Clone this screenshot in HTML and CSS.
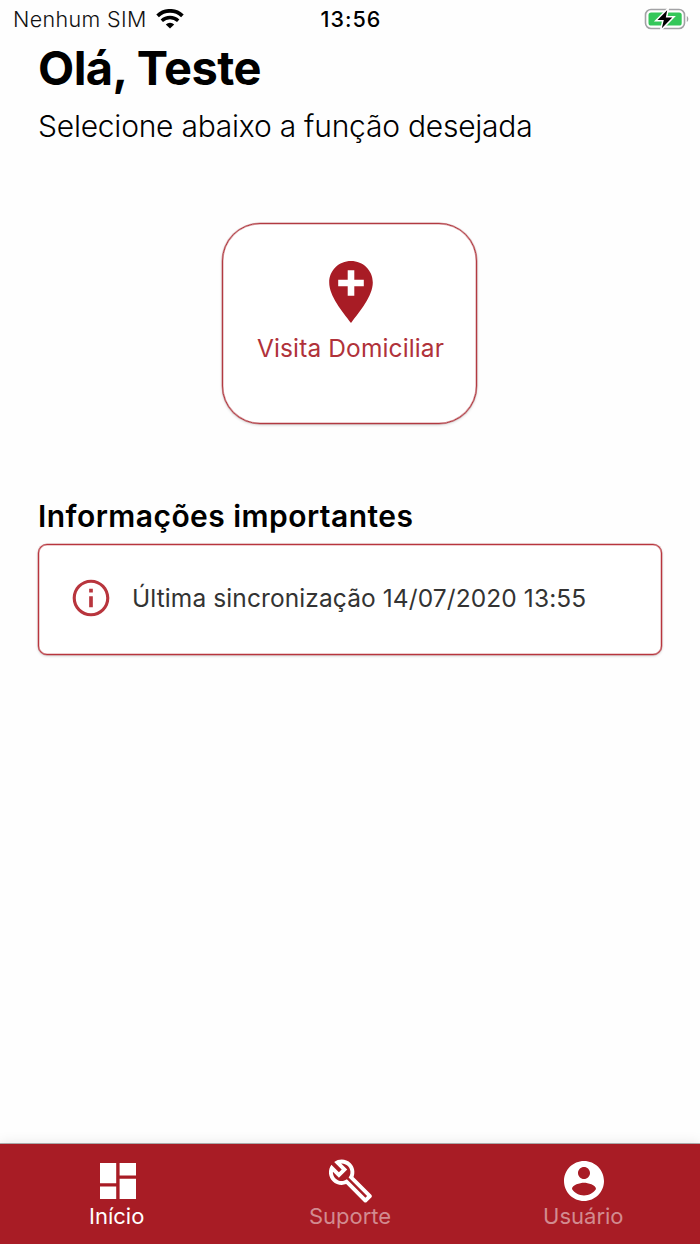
FILE: index.html
```html
<!DOCTYPE html>
<html lang="pt-BR">
<head>
<meta charset="UTF-8">
<meta name="viewport" content="width=device-width, initial-scale=1.0">
<title>Início</title>
<link rel="stylesheet" href="styles.css">
</head>
<body>

<div class="status-bar">
  <div class="carrier">
    <span class="carrier-name">Nenhum SIM</span>
    <svg class="wifi" width="28" height="20" viewBox="0 0 28 20">
      <path d="M1.600 6.800a18 18 0 0 1 24.800 0" fill="none" stroke="#000" stroke-width="3.800"/>
      <path d="M5.800 11.700a12 12 0 0 1 16.400 0" fill="none" stroke="#000" stroke-width="3.400"/>
      <path d="M14 19.600l-4.200-4.200a6 6 0 0 1 8.400 0z"/>
    </svg>
  </div>
  <span class="clock">13:56</span>
  <svg class="battery" width="45" height="24" viewBox="0 0 45 24">
    <rect x="1.500" y="2.500" width="39" height="19" rx="5.500" fill="none" stroke="#a2a2a5" stroke-width="1.600"/>
    <rect x="4.500" y="5.400" width="33.200" height="13.200" rx="2.600" fill="#34c759"/>
    <path d="M42.800 9c2 .8 2 5.200 0 6z" fill="#a2a2a5"/>
    <path d="M23.200 3.200L13.500 13h6.300L17.800 21.300 28.300 10.600h-6.500z" fill="#000" stroke="#fff" stroke-width="3" paint-order="stroke"/>
  </svg>
</div>

<main>
  <h1>Olá, Teste</h1>
  <p class="subtitle">Selecione abaixo a função desejada</p>

  <a class="visit-card" href="#visita">
    <svg width="44" height="62" viewBox="0 0 44 62">
      <path d="M22 0C9.800 0 .2 9.400 .2 21.500C.2 35 13 50 22 62C31 50 43.800 35 43.800 21.500C43.800 9.400 34.200 0 22 0z" fill="#a81c25"/>
      <path d="M18.700 9.200h6.600v9.500h9.500v6.600h-9.500v9.500h-6.600v-9.500H9.200v-6.600h9.500z" fill="#fff"/>
    </svg>
    <span>Visita Domiciliar</span>
  </a>

  <h2>Informações importantes</h2>
  <div class="info-card">
    <svg width="44" height="44" viewBox="0 0 24 24">
      <path fill="#b8353d" d="M11 7h2v2h-2zm0 4h2v6h-2zm1-9C6.480 2 2 6.480 2 12s4.480 10 10 10 10-4.480 10-10S17.520 2 12 2zm0 18.300c-4.570 0-8.300-3.730-8.300-8.300S7.430 3.700 12 3.700s8.300 3.730 8.300 8.300-3.730 8.300-8.300 8.300z"/>
    </svg>
    <span>Última sincronização 14/07/2020 13:55</span>
  </div>
</main>

<nav class="tab-bar">
  <a class="tab active" href="#inicio">
    <svg width="48" height="48" viewBox="0 0 48 48">
      <path fill="#fff" d="M6 6h16.200v20.200H6zM6 29.600h16.200V42H6zM25.600 6H42v12.400H25.600zM25.600 21.800H42V42H25.600z"/>
    </svg>
    <span>Início</span>
  </a>
  <a class="tab" href="#suporte">
    <svg width="47" height="47" viewBox="0 0 24 24">
      <path fill="#fff" d="M22.610 18.990l-9.080-9.080c.93-2.340.45-5.100-1.440-7C9.790.61 6.210.4 3.660 2.260L7.500 6.110 6.080 7.520 2.250 3.690C.39 6.230.6 9.820 2.900 12.110c1.860 1.860 4.570 2.350 6.890 1.480l9.110 9.110c.39.39 1.020.39 1.410 0l2.300-2.300c.4-.38.4-1.010 0-1.410zm-3 1.600l-9.460-9.460c-.61.45-1.290.72-2 .82-1.360.2-2.790-.21-3.830-1.250C3.370 9.760 2.930 8.500 3 7.260l3.090 3.090 4.240-4.240-3.090-3.090c1.240-.07 2.490.37 3.440 1.310 1.080 1.080 1.490 2.570 1.240 3.960-.12.710-.42 1.370-.88 1.960l9.450 9.450-.88.89z"/>
    </svg>
    <span>Suporte</span>
  </a>
  <a class="tab" href="#usuario">
    <svg width="48" height="48" viewBox="0 0 24 24">
      <path fill="#fff" d="M12 2C6.480 2 2 6.480 2 12s4.480 10 10 10 10-4.480 10-10S17.520 2 12 2zm0 3c1.660 0 3 1.340 3 3s-1.340 3-3 3-3-1.340-3-3 1.340-3 3-3zm0 14.200c-2.500 0-4.710-1.280-6-3.220.03-1.990 4-3.080 6-3.080 1.990 0 5.970 1.090 6 3.080-1.290 1.940-3.500 3.220-6 3.220z"/>
    </svg>
    <span>Usuário</span>
  </a>
</nav>

</body>
</html>
```
FILE: styles.css
```css
/* Basic reset */
* {
  margin: 0;
  padding: 0;
  box-sizing: border-box;
}

body {
  display: flex;
  flex-direction: column;
  height: 1244px;
  background: #fefefe;
  color: #000;
  font-family: Inter, "Liberation Sans", sans-serif;
}

a {
  text-decoration: none;
}

svg {
  display: block;
  flex: none;
}

span,
h1,
h2,
p {
  white-space: nowrap;
}

/* Status bar */
.status-bar {
  display: grid;
  grid-template-columns: 1fr auto 1fr;
  align-items: center;
  height: 38px;
  padding: 0 11px 0 13px;
}

.carrier {
  display: flex;
  align-items: center;
  gap: 9px;
}

.carrier-name {
  color: #111;
  font-size: 21.5px;
  font-weight: 300;
  letter-spacing: 0.35px;
}

.clock {
  font-size: 21.5px;
  font-weight: 500;
  letter-spacing: 1px;
}

.battery {
  justify-self: end;
}

/* Page content */
main {
  flex: 1;
  padding: 0 38px;
}

h1 {
  font-size: 47px;
  font-weight: 700;
  line-height: 60px;
  letter-spacing: -0.55px;
}

.subtitle {
  margin-top: 8px;
  font-size: 30px;
  font-weight: 300;
  line-height: 40px;
  letter-spacing: -0.23px;
}

.visit-card {
  display: flex;
  flex-direction: column;
  align-items: center;
  width: 255px;
  height: 201px;
  margin: 77px 185px 0 184px;
  padding: 37px 0 0 2px;
  border: 1px solid #b23a41;
  border-radius: 38px;
  box-shadow: 0 0 0 0.5px rgba(178, 58, 65, 0.5), 0 1px 3px rgba(0, 0, 0, 0.2), inset 0 0 0 0.5px rgba(178, 58, 65, 0.5);
  background: #fff;
  color: #b0323a;
  font-size: 24.5px;
  font-weight: 400;
  line-height: 30px;
  letter-spacing: 0.12px;
}

.visit-card span {
  margin-top: 10px;
}

h2 {
  margin-top: 72px;
  font-size: 30px;
  font-weight: 600;
  line-height: 40px;
  letter-spacing: 0.45px;
}

.info-card {
  display: flex;
  align-items: center;
  gap: 19px;
  height: 111px;
  margin-top: 8px;
  padding: 0 30px 3px;
  border: 1px solid #b8353d;
  border-radius: 9px;
  box-shadow: 0 0 0 0.5px rgba(184, 53, 61, 0.5), 0 1px 3px rgba(0, 0, 0, 0.2), inset 0 0 0 0.5px rgba(184, 53, 61, 0.5);
  background: #fff;
  color: #333;
  font-size: 24.5px;
  font-weight: 400;
  letter-spacing: 0.1px;
}

/* Bottom tabs */
.tab-bar {
  display: grid;
  grid-template-columns: repeat(3, 1fr);
  height: 100px;
  background: #a81c25;
  box-shadow: 0 -1px 0 rgba(0, 0, 0, 0.3), 0 -2px 12px rgba(0, 0, 0, 0.08);
}

.tab {
  display: flex;
  flex-direction: column;
  align-items: center;
  padding-top: 13px;
  color: #d28b90;
  font-size: 22px;
  line-height: 23px;
}

.tab svg {
  height: 48px;
  margin-left: 2px;
}

.active {
  color: #fff;
}
```
